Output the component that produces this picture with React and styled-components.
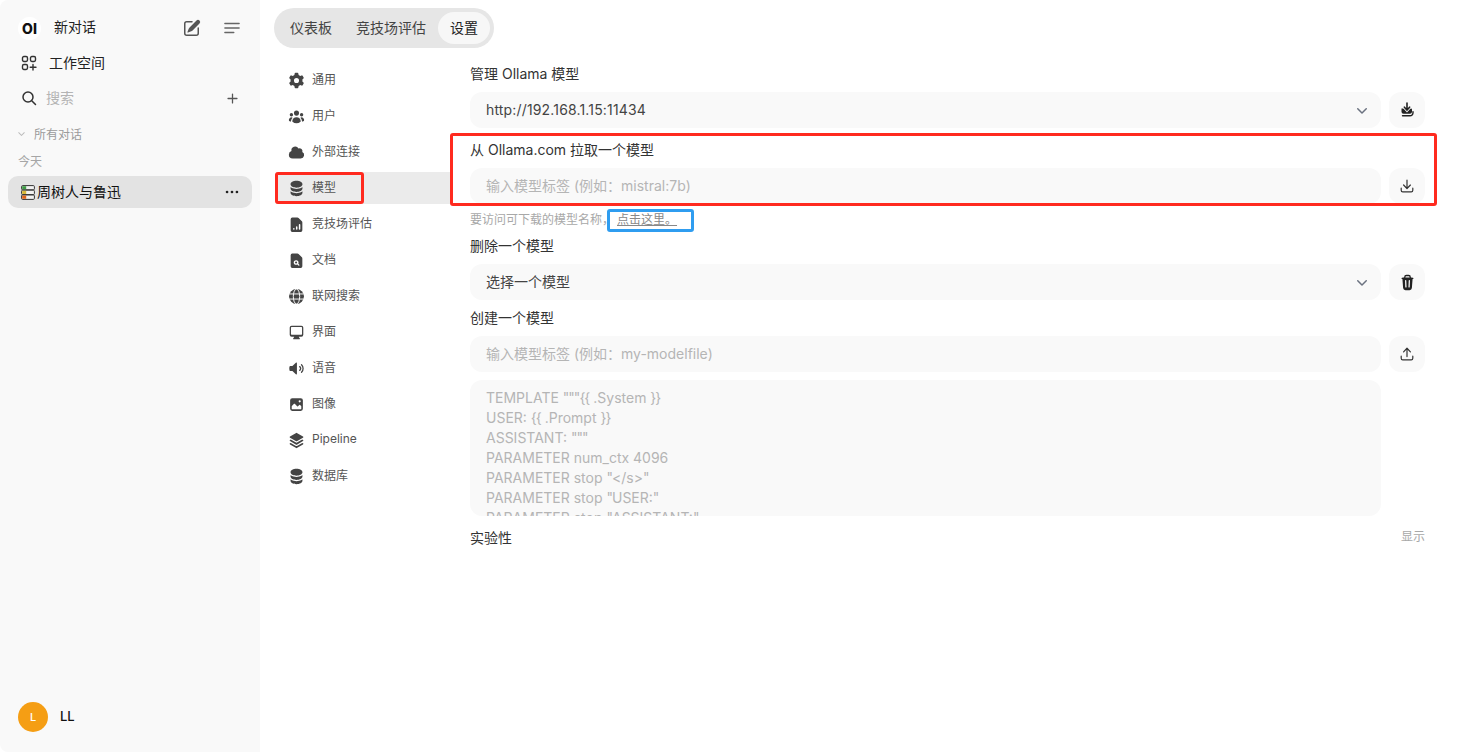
import React from "react";
import styled, { createGlobalStyle } from "styled-components";
import {
  HiMiniCog6Tooth,
  HiMiniUserGroup,
  HiMiniCloud,
  HiMiniCircleStack,
  HiMiniComputerDesktop,
  HiMiniSpeakerWave,
  HiMiniSquare3Stack3D,
  HiMiniArrowDownTray,
  HiMiniTrash,
  HiMiniArrowUpTray,
  HiMiniPencilSquare,
  HiMiniPlus,
  HiMiniChevronDown,
  HiMiniEllipsisHorizontal,
} from "react-icons/hi2";

const GlobalStyle = createGlobalStyle`
  html, body { margin: 0; padding: 0; background: #fff; }
  body {
    font-family: Inter, "Noto Sans CJK SC", "Noto Sans", sans-serif;
    color: #1f1f1f;
  }
`;

const ChartDoc = ({ size, color }) => (
  <svg width={size} height={size} viewBox="0 0 16 16" fill={color}>
    <path
      fillRule="evenodd"
      d="M4 1.5A1.5 1.5 0 0 0 2.5 3v10.5A1.5 1.5 0 0 0 4 15h8a1.5 1.5 0 0 0 1.5-1.5V6.1a1.5 1.5 0 0 0-.44-1.06L9.96 1.94A1.5 1.5 0 0 0 8.9 1.5H4Zm6.2 6.8a.7.7 0 0 1 1.4 0v4a.7.7 0 0 1-1.4 0v-4Zm-2.7 2a.7.7 0 0 1 1.4 0v2a.7.7 0 0 1-1.4 0v-2Zm-2 1a.7.7 0 0 0-.7.7v.3a.7.7 0 0 0 1.4 0V12a.7.7 0 0 0-.7-.7Z"
    />
  </svg>
);

const SearchDoc = ({ size, color }) => (
  <svg width={size} height={size} viewBox="0 0 16 16" fill={color}>
    <path
      fillRule="evenodd"
      d="M4 1.5A1.5 1.5 0 0 0 2.5 3v10.5A1.5 1.5 0 0 0 4 15h8a1.5 1.5 0 0 0 1.5-1.5V6.1a1.5 1.5 0 0 0-.44-1.06L9.96 1.94A1.5 1.5 0 0 0 8.9 1.5H4Zm3.6 6.2a2.2 2.2 0 1 0 1.2 4.04l1 1a.6.6 0 0 0 .85-.85l-1-1A2.2 2.2 0 0 0 7.6 7.7Zm-1 2.2a1 1 0 1 1 2 0 1 1 0 0 1-2 0Z"
    />
  </svg>
);

const Globe = ({ size, color }) => (
  <svg width={size} height={size} viewBox="0 0 16 16">
    <circle cx="8" cy="8" r="7" fill={color} />
    <g fill="none" stroke="#fff" strokeWidth="0.9">
      <path d="M1 5.6h14M1 10.4h14" />
      <ellipse cx="8" cy="8" rx="3" ry="7" />
    </g>
  </svg>
);

const Photo = ({ size, color }) => (
  <svg width={size} height={size} viewBox="0 0 16 16" fill={color}>
    <path
      fillRule="evenodd"
      d="M2 4a2 2 0 0 1 2-2h8a2 2 0 0 1 2 2v8a2 2 0 0 1-2 2H4a2 2 0 0 1-2-2V4Zm10.5 5.707a.5.5 0 0 0-.146-.353l-1-1a.5.5 0 0 0-.708 0L9.354 9.646a.5.5 0 0 1-.708 0L6.354 7.354a.5.5 0 0 0-.708 0l-2 2a.5.5 0 0 0-.146.353V12a.5.5 0 0 0 .5.5h8a.5.5 0 0 0 .5-.5V9.707ZM12 5a1 1 0 1 1-2 0 1 1 0 0 1 2 0Z"
    />
  </svg>
);

const navItems = [
  { label: "通用", Icon: HiMiniCog6Tooth },
  { label: "用户", Icon: HiMiniUserGroup },
  { label: "外部连接", Icon: HiMiniCloud },
  { label: "模型", Icon: HiMiniCircleStack, active: true },
  { label: "竞技场评估", Icon: ChartDoc },
  { label: "文档", Icon: SearchDoc },
  { label: "联网搜索", Icon: Globe },
  { label: "界面", Icon: HiMiniComputerDesktop },
  { label: "语音", Icon: HiMiniSpeakerWave },
  { label: "图像", Icon: Photo },
  { label: "Pipeline", Icon: HiMiniSquare3Stack3D },
  { label: "数据库", Icon: HiMiniCircleStack },
];

const modelfile = [
  'TEMPLATE """{{ .System }}',
  "USER: {{ .Prompt }}",
  'ASSISTANT: """',
  "PARAMETER num_ctx 4096",
  'PARAMETER stop "</s>"',
  'PARAMETER stop "USER:"',
  'PARAMETER stop "ASSISTANT:"',
];

// quotes and braces sit tighter in the reference font
const renderLine = (line) =>
  line.split(/(["{}]+)/).map((part, i) => (i % 2 ? <Tight key={i}>{part}</Tight> : part));

const App = () => {
  return (
    <Page>
      <GlobalStyle />
      <Sidebar>
        <TopRow>
          <Logo>OI</Logo>
          <NewChat>新对话</NewChat>
          <HiMiniPencilSquare size={20} color="#555" />
          <MenuLines viewBox="0 0 18 14">
            <path d="M1 2h16M1 7h16M1 12h10" stroke="#666" strokeWidth="1.6" strokeLinecap="round" fill="none" />
          </MenuLines>
        </TopRow>
        <WorkRow>
          <svg width="16" height="16" viewBox="0 0 16 16" fill="none" stroke="#333" strokeWidth="1.4">
            <rect x="1.5" y="1.5" width="5" height="5" rx="1.4" />
            <rect x="9.5" y="1.5" width="5" height="5" rx="1.4" />
            <rect x="1.5" y="9.5" width="5" height="5" rx="1.4" />
            <path d="M12 9.5v5.5M9.2 12.2h5.8" strokeLinecap="round" />
          </svg>
          <RowText>工作空间</RowText>
        </WorkRow>
        <SearchRow>
          <svg width="16" height="16" viewBox="0 0 16 16" fill="none" stroke="#333" strokeWidth="1.5">
            <circle cx="7" cy="7" r="5" />
            <path d="M11 11l3.5 3.5" strokeLinecap="round" />
          </svg>
          <SearchText>搜索</SearchText>
          <HiMiniPlus size={17} color="#555" />
        </SearchRow>
        <FolderRow>
          <HiMiniChevronDown size={13} color="#bbb" />
          <span>所有对话</span>
        </FolderRow>
        <DayLabel>今天</DayLabel>
        <ChatItem>
          <BookIcon viewBox="0 0 14 15">
            <rect x="0.6" y="0.6" width="12.8" height="4.2" rx="1" fill="#f2f2f2" stroke="#333" strokeWidth="1" />
            <rect x="0.6" y="5.2" width="12.8" height="4.4" rx="1" fill="#f2f2f2" stroke="#333" strokeWidth="1" />
            <rect x="0.6" y="10" width="12.8" height="4.4" rx="1" fill="#f2f2f2" stroke="#333" strokeWidth="1" />
            <rect x="1.2" y="1.2" width="4" height="3" fill="#3f9d46" />
            <rect x="1.2" y="5.8" width="4" height="3.2" fill="#d8b93a" />
            <rect x="1.2" y="10.6" width="4" height="3.2" fill="#e0641a" />
          </BookIcon>
          <ChatTitle>周树人与鲁迅</ChatTitle>
          <HiMiniEllipsisHorizontal size={18} color="#222" />
        </ChatItem>
        <UserRow>
          <Avatar>L</Avatar>
          <UserName>LL</UserName>
        </UserRow>
      </Sidebar>

      <Main>
        <Tabs>
          <Tab>仪表板</Tab>
          <Tab>竞技场评估</Tab>
          <Tab $active>设置</Tab>
        </Tabs>
        <Body>
          <Nav>
            {navItems.map(({ label, Icon, active }) => (
              <NavItem key={label} $active={active}>
                <Icon size={17} color="#444" />
                <span>{label}</span>
              </NavItem>
            ))}
          </Nav>
          <Content>
            <Label>管理 Ollama 模型</Label>
            <Row>
              <Field>
                <UrlText>http://192.168.1.15:11434</UrlText>
                <HiMiniChevronDown size={20} color="#6b7280" />
              </Field>
              <IconButton>
                <svg width="16" height="16" viewBox="0 0 16 16">
                  <path d="M2.5 6.5h3v-1h5v1h1.5a1 1 0 0 1 1 1v2.2a2 2 0 0 1-2 2h-6.5a2 2 0 0 1-2-2z" fill="#222" />
                  <path d="M8 1v6.5M5.4 5.2 8 8l2.6-2.8" stroke="#f9f9f9" strokeWidth="3.4" fill="none" strokeLinecap="round" />
                  <path d="M8 1v6.5M5.4 5.2 8 8l2.6-2.8" stroke="#222" strokeWidth="1.6" fill="none" strokeLinecap="round" />
                  <path d="M3.5 13.8h7.5a3 3 0 0 0 3-3V9.6" stroke="#222" strokeWidth="1.4" fill="none" strokeLinecap="round" />
                </svg>
              </IconButton>
            </Row>
            <Label $top={12}>从 Ollama.com 拉取一个模型</Label>
            <Row>
              <Field>
                <Placeholder>输入模型标签 (例如：mistral:7b)</Placeholder>
              </Field>
              <IconButton>
                <HiMiniArrowDownTray size={16} color="#333" />
              </IconButton>
            </Row>
            <Hint>
              要访问可下载的模型名称，<HintLink>点击这里。</HintLink>
            </Hint>
            <Label $top={8}>删除一个模型</Label>
            <Row>
              <Field>
                <FieldText>选择一个模型</FieldText>
                <HiMiniChevronDown size={20} color="#6b7280" />
              </Field>
              <IconButton>
                <HiMiniTrash size={17} color="#222" />
              </IconButton>
            </Row>
            <Label $top={8}>创建一个模型</Label>
            <Row>
              <Field>
                <Placeholder>输入模型标签 (例如：my-modelfile)</Placeholder>
              </Field>
              <IconButton>
                <HiMiniArrowUpTray size={16} color="#333" />
              </IconButton>
            </Row>
            <Row $top={8}>
              <TextArea>
                {modelfile.map((line) => (
                  <div key={line}>{renderLine(line)}</div>
                ))}
              </TextArea>
              <Spacer />
            </Row>
            <Footer>
              <Label>实验性</Label>
              <ShowLink>显示</ShowLink>
            </Footer>
          </Content>
        </Body>
      </Main>

      <Mark $color="#ff2a1f" $left={450} $top={133} $width={987} $height={73} />
      <Mark $color="#ff2a1f" $left={275} $top={172} $width={89} $height={32} />
      <Mark $color="#2f9df0" $left={607} $top={209} $width={87} $height={23} />
    </Page>
  );
};

export default App;

const Page = styled.div`
  position: relative;
  display: flex;
  width: 1461px;
  height: 752px;
  overflow: hidden;
  background: #fff;
`;

const Sidebar = styled.aside`
  display: flex;
  flex-direction: column;
  width: 260px;
  height: 100%;
  flex: none;
  box-sizing: border-box;
  background: #f9f9f9;
  border-radius: 8px 0 0 8px;
`;

const TopRow = styled.div`
  display: flex;
  align-items: center;
  height: 24px;
  margin-top: 16px;
  padding: 0 20px 0 18px;
`;

const Logo = styled.div`
  display: flex;
  align-items: center;
  justify-content: center;
  width: 23px;
  height: 23px;
  border-radius: 50%;
  background: #fff;
  color: #111;
  font-size: 14px;
  font-weight: 800;
`;

const NewChat = styled.span`
  flex: 1;
  margin-left: 13px;
  padding-bottom: 4px;
  font-size: 14px;
  color: #222;
`;

const MenuLines = styled.svg`
  width: 16px;
  height: 14px;
  margin-left: 22px;
`;

const WorkRow = styled.div`
  display: flex;
  align-items: center;
  gap: 12px;
  height: 24px;
  margin-top: 11px;
  padding-left: 21px;
  font-size: 14px;
  color: #222;
`;

const RowText = styled.span`
  padding-bottom: 2px;
`;

const SearchRow = styled.div`
  display: flex;
  align-items: center;
  height: 24px;
  margin-top: 11px;
  padding: 0 19px 0 21px;
`;

const SearchText = styled.span`
  flex: 1;
  margin-left: 9px;
  padding-bottom: 2px;
  font-size: 14px;
  color: #b4b4b4;
`;

const FolderRow = styled.div`
  display: flex;
  align-items: center;
  gap: 6px;
  height: 18px;
  margin-top: 14px;
  padding-left: 15px;
  font-size: 12px;
  color: #9b9b9b;
`;

const DayLabel = styled.div`
  height: 18px;
  margin-top: 11px;
  padding-left: 18px;
  font-size: 12px;
  line-height: 18px;
  color: #a6a6a6;
`;

const ChatItem = styled.div`
  display: flex;
  align-items: center;
  height: 32px;
  margin: 5px 8px 0;
  padding: 0 11px 0 13px;
  border-radius: 10px;
  background: #e3e3e3;
`;

const BookIcon = styled.svg`
  width: 14px;
  height: 15px;
  flex: none;
`;

const ChatTitle = styled.span`
  flex: 1;
  margin-left: 2px;
  padding-bottom: 2px;
  font-size: 14px;
  color: #111;
`;

const UserRow = styled.div`
  display: flex;
  align-items: center;
  gap: 12px;
  margin-top: auto;
  padding: 0 0 20px 18px;
`;

const Avatar = styled.div`
  display: flex;
  align-items: center;
  justify-content: center;
  width: 30px;
  height: 30px;
  border-radius: 50%;
  background: #f59e14;
  color: #fff;
  font-size: 11px;
  font-weight: 500;
`;

const UserName = styled.span`
  padding-bottom: 2px;
  font-size: 13px;
  font-weight: 500;
  color: #111;
`;

const Main = styled.main`
  flex: 1;
  min-width: 0;
  display: flex;
  flex-direction: column;
`;

const Tabs = styled.nav`
  display: flex;
  align-items: center;
  align-self: flex-start;
  height: 40px;
  margin: 8px 0 0 14px;
  padding: 0 4px;
  box-sizing: border-box;
  border-radius: 20px;
  background: #e6e6e6;
`;

const Tab = styled.div`
  display: flex;
  align-items: center;
  height: 32px;
  box-sizing: border-box;
  padding: 0 12px 2px;
  border-radius: 16px;
  font-size: 14px;
  color: ${(p) => (p.$active ? "#222" : "#444")};
  background: ${(p) => (p.$active ? "#f7f7f7" : "transparent")};
`;

const Body = styled.div`
  display: flex;
  margin-top: 16px;
`;

const Nav = styled.div`
  display: flex;
  flex-direction: column;
  gap: 4px;
  width: 174px;
  margin-left: 16px;
  flex: none;
`;

const NavItem = styled.div`
  display: flex;
  align-items: center;
  gap: 7px;
  height: 32px;
  padding-left: 12px;
  font-size: 12px;
  color: #555;
  background: ${(p) => (p.$active ? "#ebebeb" : "transparent")};

  span {
    padding-bottom: 4px;
  }
`;

const Content = styled.div`
  flex: 1;
  display: flex;
  flex-direction: column;
  margin-left: 20px;
  margin-right: 36px;
`;

const Label = styled.div`
  height: 20px;
  margin-top: ${(p) => p.$top || 0}px;
  font-size: 14px;
  line-height: 20px;
  color: #333;
`;

const Row = styled.div`
  display: flex;
  gap: 8px;
  margin-top: ${(p) => (p.$top !== undefined ? p.$top : 8)}px;
`;

const Field = styled.div`
  flex: 1;
  display: flex;
  align-items: center;
  justify-content: space-between;
  height: 36px;
  box-sizing: border-box;
  padding: 0 9px 0 16px;
  border-radius: 12px;
  background: #f9f9f9;
  font-size: 14px;
`;

const FieldText = styled.span`
  padding-bottom: 2px;
  color: #444;
`;

const UrlText = styled(FieldText)`
  letter-spacing: 0.16px;
`;

const Placeholder = styled.span`
  padding-bottom: 2px;
  color: #b5b5b5;
`;

const IconButton = styled.button`
  display: flex;
  align-items: center;
  justify-content: center;
  width: 36px;
  height: 36px;
  flex: none;
  padding: 0;
  border: 0;
  border-radius: 12px;
  background: #f9f9f9;
`;

const Hint = styled.div`
  height: 17px;
  margin-top: 7px;
  font-size: 12px;
  line-height: 18px;
  color: #a8a8a8;
`;

const HintLink = styled.span`
  margin-left: 3px;
  color: #888;
  text-decoration: underline;
`;

const TextArea = styled.div`
  flex: 1;
  height: 136px;
  box-sizing: border-box;
  padding: 8px 16px;
  overflow: hidden;
  border-radius: 12px;
  background: #f9f9f9;
  font-size: 14px;
  line-height: 20px;
  white-space: pre;
  color: #b5b5b5;
`;

const Tight = styled.span`
  letter-spacing: -1px;
`;

const Spacer = styled.div`
  width: 36px;
  flex: none;
`;

const Footer = styled.div`
  display: flex;
  align-items: center;
  justify-content: space-between;
  height: 20px;
  margin-top: 12px;
`;

const ShowLink = styled.span`
  padding-bottom: 3px;
  font-size: 12px;
  line-height: 16px;
  color: #a8a8a8;
`;

const Mark = styled.div`
  position: absolute;
  left: ${(p) => p.$left}px;
  top: ${(p) => p.$top}px;
  width: ${(p) => p.$width}px;
  height: ${(p) => p.$height}px;
  box-sizing: border-box;
  border: 3px solid ${(p) => p.$color};
  border-radius: 3px;
  pointer-events: none;
`;
